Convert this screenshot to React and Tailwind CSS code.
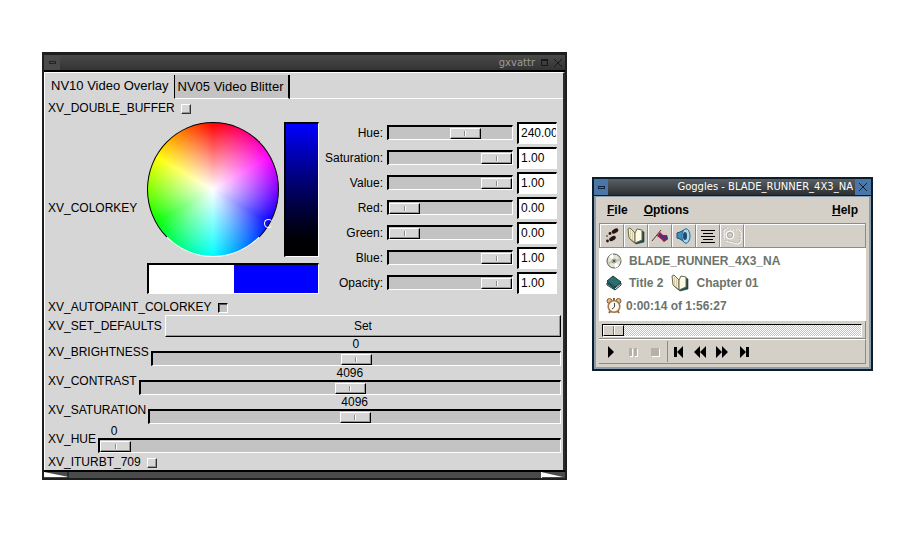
import { useState } from 'react';

const THUMB =
  '[&::-webkit-slider-thumb]:appearance-none [&::-webkit-slider-thumb]:h-[11px] [&::-webkit-slider-thumb]:w-[31px] [&::-webkit-slider-thumb]:border [&::-webkit-slider-thumb]:border-t-white [&::-webkit-slider-thumb]:border-l-white [&::-webkit-slider-thumb]:border-r-black [&::-webkit-slider-thumb]:border-b-black [&::-webkit-slider-thumb]:shadow-[inset_-1px_-1px_0_#969696] [&::-webkit-slider-thumb]:bg-[#d6d6d6] [&::-webkit-slider-thumb]:bg-[linear-gradient(90deg,#8a8a8a_1px,#fff_1px)] [&::-webkit-slider-thumb]:bg-size-[2px_5px] [&::-webkit-slider-thumb]:bg-center [&::-webkit-slider-thumb]:bg-no-repeat';
const TROUGH =
  'block appearance-none rounded-none h-[15px] min-w-0 bg-[#c3c3c3] border-t-2 border-l-2 border-t-black border-l-black border-b border-r border-b-white border-r-white';

const channels = [
  { name: 'Hue', pos: 66, text: '240.00' },
  { name: 'Saturation', pos: 100, text: '1.00' },
  { name: 'Value', pos: 100, text: '1.00' },
  { name: 'Red', pos: 0, text: '0.00' },
  { name: 'Green', pos: 0, text: '0.00' },
  { name: 'Blue', pos: 100, text: '1.00' },
  { name: 'Opacity', pos: 100, text: '1.00' },
];

function ChannelRow({ channel }) {
  const [pos, setPos] = useState(channel.pos);
  const id = `channel-${channel.name}`;
  return (
    <div className="flex items-center h-[25px]">
      <label htmlFor={id} className="flex-1 text-right pr-1">{channel.name}:</label>
      <input
        id={id}
        type="range"
        value={pos}
        onChange={(e) => setPos(e.target.value)}
        className={`w-[126px] mr-1 ${TROUGH} ${THUMB}`}
      />
      <input
        type="text"
        aria-label={`${channel.name} value`}
        defaultValue={channel.text}
        className="w-10 h-[22px] pl-[2px] bg-white border-t-2 border-l-2 border-t-black border-l-black border-b border-r border-b-white border-r-white outline-none"
      />
    </div>
  );
}

function CheckRow({ label, checked, className }) {
  const id = `attr-${label}`;
  return (
    <div className={`flex items-center ${className}`}>
      <label htmlFor={id} className="pr-[2px]">{label}</label>
      <input
        id={id}
        type="checkbox"
        defaultChecked={checked}
        className="appearance-none ml-1 mt-[2px] size-[10px] bg-[#d6d6d6] border border-t-white border-l-white border-r-[#333] border-b-[#333] shadow-[inset_-1px_-1px_0_#969696] checked:bg-[#c3c3c3] checked:border-t-black checked:border-l-black checked:border-r-white checked:border-b-white checked:shadow-[inset_1px_1px_0_#555]"
      />
    </div>
  );
}

function ScaleRow({ label, initial, min = 0, max }) {
  const [value, setValue] = useState(initial);
  const ratio = (value - min) / (max - min);
  const id = `attr-${label}`;
  return (
    <div className="flex items-center h-[29px]">
      <label htmlFor={id} className="pr-[2px]">{label}</label>
      <div className="flex-1">
        <div className="flex h-[14px] leading-[14px]">
          <div style={{ flexGrow: ratio }} />
          <output htmlFor={id} className="w-8 text-center">{value}</output>
          <div style={{ flexGrow: 1 - ratio }} />
        </div>
        <input
          id={id}
          type="range"
          min={min}
          max={max}
          value={value}
          onChange={(e) => setValue(Number(e.target.value))}
          className={`w-full ${TROUGH} ${THUMB}`}
        />
      </div>
    </div>
  );
}

function ColorWheel() {
  return (
    <div className="relative w-[132px] h-[135px]">
      <div className="size-full rounded-[50%] border border-black border-b-white bg-[radial-gradient(closest-side,#fff,transparent),conic-gradient(#f00,#f0f,#00f,#0ff,#0f0,#ff0,#f00)]" />
      <span className="absolute right-[6px] bottom-[29px] size-[9px] rounded-full border border-white border-r-transparent" />
    </div>
  );
}

function AttrWindow() {
  return (
    <section className="border-2 border-[#1c1f1e] border-t-[3px] bg-[#d6d6d6] text-black">
      <header className="flex items-center h-[17px] bg-linear-to-b from-[#4a4a4a] to-[#333] border-b-2 border-black text-[#9a9a9a]">
        <button type="button" aria-label="Minimize" className="w-4 h-[15px] flex items-center justify-center bg-[#4a4a4a]">
          <span className="w-[7px] h-[3px] border border-[#222]" />
        </button>
        <h1 className="flex-1 text-right pr-[6px] text-[10px] leading-[15px] font-['DejaVu_Sans',sans-serif]">gxvattr</h1>
        <button type="button" aria-label="Maximize" className="w-[13px] h-[15px] flex items-center">
          <span className="size-[7px] border border-t-2 border-[#181818]" />
        </button>
        <button type="button" aria-label="Close" className="w-[11px] h-[15px] flex items-center">
          <svg width="8" height="8" viewBox="0 0 8 8" stroke="#181818"><path d="M0 0 8 8M8 0 0 8" /></svg>
        </button>
      </header>

      <div className="border-t border-l border-white border-r-2 border-r-[#2c2c2c]">
        <nav className="flex h-[26px] text-[13px]">
          <button type="button" className="pl-[6px] pr-[5px]">NV10 Video Overlay</button>
          <button type="button" className="mt-[2px] pl-[3px] pr-1 bg-[#c3c3c3] border-l border-r-2 border-black border-b border-b-white">NV05 Video Blitter</button>
          <div className="flex-1 border-b border-white" />
        </nav>

        <div className="pl-[3px] pr-[2px]">
          <CheckRow label="XV_DOUBLE_BUFFER" className="h-[17px]" />

          <div className="flex items-start h-[183px]">
            <span className="self-center w-[99px]">XV_COLORKEY</span>
            <div className="pt-[6px]">
              <div className="flex gap-[5px]">
                <ColorWheel />
                <div className="w-[35px] border-2 border-r border-b border-t-black border-l-black border-r-white border-b-white bg-linear-to-b from-[#00f] to-black" />
              </div>
              <div className="flex mt-[6px] h-[31px] border-2 border-r border-b border-t-black border-l-black border-r-white border-b-white">
                <div className="flex-1 bg-white" />
                <div className="flex-1 bg-[#00f]" />
              </div>
            </div>
            <div className="flex-1 pt-1 pr-1">
              {channels.map((channel) => (
                <ChannelRow key={channel.name} channel={channel} />
              ))}
            </div>
          </div>

          <CheckRow label="XV_AUTOPAINT_COLORKEY" checked className="h-4" />
          <div className="flex items-center h-[22px]">
            <label htmlFor="set-defaults" className="pr-[3px]">XV_SET_DEFAULTS</label>
            <button id="set-defaults" type="button" className="flex-1 h-[22px] border border-t-white border-l-white border-r-black border-b-black shadow-[inset_-1px_-1px_0_#969696]">Set</button>
          </div>
          <ScaleRow label="XV_BRIGHTNESS" initial={0} min={-512} max={512} />
          <ScaleRow label="XV_CONTRAST" initial={4096} max={8191} />
          <ScaleRow label="XV_SATURATION" initial={4096} max={8191} />
          <ScaleRow label="XV_HUE" initial={0} max={360} />
          <CheckRow label="XV_ITURBT_709" className="h-[17px]" />
        </div>
      </div>

      <footer className="flex justify-between h-2 border-t-2 border-black bg-[#4a4a4a]">
        <svg width="25" height="6" viewBox="0 0 25 6"><path d="M0 0v5h25z" fill="#fff" /><path d="M24 0v6" stroke="#111" /></svg>
        <svg width="24" height="6" viewBox="0 0 24 6"><path d="M0 0v6" stroke="#fff" strokeWidth="2" /><path d="M0 0v5h22z" fill="#fff" /></svg>
      </footer>
    </section>
  );
}

const Footsteps = () => (
  <svg width="18" height="18" viewBox="0 0 18 18" fill="#2a1215">
    <ellipse cx="12" cy="4" rx="3.6" ry="2" transform="rotate(-30 12 4)" />
    <circle cx="7" cy="6.500" r="1.400" />
    <ellipse cx="9.500" cy="11.500" rx="3.600" ry="2" transform="rotate(-30 9.500 11.500)" />
    <circle cx="4.500" cy="14" r="1.400" />
    <circle cx="4" cy="9" r="0.800" />
  </svg>
);

const OpenBook = () => (
  <svg width="18" height="18" viewBox="0 0 18 18">
    <path d="M3 12 9 17 17 15V5L15 4V13z" fill="#1d4f52" stroke="#14393b" strokeWidth=".6" />
    <path d="M1 2 3 1 8 6V16L2 11z" fill="#f3edcb" stroke="#6b6950" />
    <path d="M8 6 10 2 15 3V13L8 16z" fill="#fffbe2" stroke="#6b6950" />
    <path d="M3.500 3v8M5.500 5v8" stroke="#d6cfa8" />
  </svg>
);

const Flag = () => (
  <svg width="18" height="18" viewBox="0 0 18 18">
    <path d="M1 14 10 3" stroke="#5b2f30" />
    <path d="M6 9 9 5 12 8 16 8 17 12 13 15 10 12z" fill="#a5183c" />
    <path d="M9 7 12 8 13 11 10 12zM13 11 16 9 17 12 14 14z" fill="#39388f" />
  </svg>
);

const Speaker = () => (
  <svg width="18" height="18" viewBox="0 0 18 18">
    <path d="M2 6 5 5 11 2V16L5 12 2 11z" fill="#3f8fba" stroke="#205371" />
    <ellipse cx="11" cy="9" rx="4" ry="7.200" fill="#a9d8ea" stroke="#2a6592" />
    <ellipse cx="10" cy="9" rx="2" ry="4" fill="#1d4a74" />
  </svg>
);

const Lines = () => (
  <svg width="18" height="18" viewBox="0 0 18 18" stroke="#000" shapeRendering="crispEdges">
    <path d="M2 3.500h14M4 6.500h10M2 9.500h14M4 12.500h10M2 15.500h14" />
  </svg>
);

const Camera = () => (
  <svg width="20" height="18" viewBox="0 0 20 18" fill="none">
    <path d="M2 4 5 1 8 3H17L19 5V15L16 17 4 14 2 12z" stroke="#fff" />
    <path d="M1 3 4 1 8 3H16L18 5V14L15 16 3 13 1 11z" stroke="#b4b0a8" strokeDasharray="2 1" />
    <circle cx="8" cy="8" r="4" stroke="#fff" />
    <circle cx="8" cy="8" r="2.500" stroke="#aaa69e" />
  </svg>
);

const Disc = () => (
  <svg width="16" height="16" viewBox="0 0 16 16">
    <circle cx="8" cy="8" r="7" fill="#e4e4d8" stroke="#55574f" />
    <path d="M8 8 3 3.500A7 7 0 0 1 7 1zM8 8 13 12.500A7 7 0 0 1 9 15z" fill="#fff" />
    <path d="M8 8 14 4.500 15 8zM8 8 1.500 9 3 12z" fill="#bcd0b0" />
    <circle cx="8" cy="8" r="2" fill="#fff" stroke="#8d7a7a" />
    <circle cx="8" cy="8" r="1" fill="#222" />
  </svg>
);

const ClosedBook = () => (
  <svg width="16" height="16" viewBox="0 0 16 16">
    <path d="M1 8 9 13 15 8V10L9 15 1 10z" fill="#eee" stroke="#163b40" />
    <path d="M1 6 7 1 15 7 9 12z" fill="#2d6e71" stroke="#163b40" />
    <path d="M1 6 9 12V15L1 9z" fill="#1d4f52" />
  </svg>
);

const Clock = () => (
  <svg width="16" height="16" viewBox="0 0 16 16">
    <path d="M3 15 5 12M13 15 11 12M8 0v3" stroke="#8a6238" strokeWidth="2" />
    <circle cx="3.500" cy="3" r="2.500" fill="#e3bd88" stroke="#7d5c3a" />
    <circle cx="12.500" cy="3" r="2.500" fill="#e3bd88" stroke="#7d5c3a" />
    <circle cx="8" cy="8.500" r="5.800" fill="#f9f7f0" stroke="#a5794c" strokeWidth="1.600" />
    <path d="M8.500 5V9L6 11" fill="none" stroke="#444" />
  </svg>
);

const tools = [
  { name: 'Go', icon: Footsteps },
  { name: 'Chapters', icon: OpenBook },
  { name: 'Bookmarks', icon: Flag },
  { name: 'Audio', icon: Speaker },
  { name: 'Subtitles', icon: Lines },
  { name: 'Snapshot', icon: Camera, disabled: true },
];

const transport = [
  { name: 'Play', d: 'M4 1 10 7 4 13z' },
  { name: 'Pause', d: 'M3 3h3v8H3zM8 3h3v8H8z', disabled: true },
  { name: 'Stop', d: 'M3 3h8v8H3z', disabled: true },
  { name: 'Previous', d: 'M2 2h3v10H2zM5 7 11 1V13z' },
  { name: 'Rewind', d: 'M1 7 7 1V13zM7 7 13 1V13z' },
  { name: 'Forward', d: 'M1 1 7 7 1 13zM7 1 13 7 7 13z' },
  { name: 'Next', d: 'M3 1 9 7 3 13zM9 2h3v10H9z' },
];

function GogglesWindow() {
  const [time, setTime] = useState(0);
  return (
    <section className="border-2 border-[#0c1d2b] bg-[#d4d0c8] font-bold">
      <header className="flex items-center h-[17px] bg-linear-to-b from-[#5a6064] to-[#2c3033] border-b border-[#0c1d2b] text-white">
        <button type="button" aria-label="Minimize" className="w-[14px] h-4 flex items-center justify-center bg-[#4a76a8]">
          <span className="w-[7px] h-[3px] border border-[#10233a]" />
        </button>
        <h1 className="flex-1 text-right pr-[2px] text-[10px] leading-4 font-normal whitespace-nowrap font-['DejaVu_Sans',sans-serif]">Goggles - BLADE_RUNNER_4X3_NA</h1>
        <button type="button" aria-label="Close" className="w-4 h-4 flex items-center justify-center bg-[#4a76a8]">
          <svg width="8" height="8" viewBox="0 0 8 8" stroke="#10233a"><path d="M0 0 8 8M8 0 0 8" /></svg>
        </button>
      </header>

      <div className="border-2 border-t border-[#8b9dad] px-[3px] pb-[3px]">
        <nav className="flex items-center h-[26px] px-2 gap-4">
          <button type="button"><u>F</u>ile</button>
          <button type="button"><u>O</u>ptions</button>
          <button type="button" className="ml-auto"><u>H</u>elp</button>
        </nav>

        <div className="flex h-[25px] border-t border-l border-[#8e8b84] border-b border-r">
          {tools.map(({ name, icon: Icon, disabled }) => (
            <button key={name} type="button" aria-label={name} disabled={disabled} className="w-6 flex items-center justify-center border-t border-l border-white border-r border-r-[#8e8b84]">
              <Icon />
            </button>
          ))}
          <div className="flex-1 border-t border-l border-white" />
        </div>

        <div className="bg-white h-[73px] pl-[7px] pt-[3px] text-[#6b746b]">
          <div className="flex items-center h-5 gap-[7px]"><Disc />BLADE_RUNNER_4X3_NA</div>
          <div className="flex items-center h-6 gap-2">
            <span className="flex items-center gap-[7px]"><ClosedBook />Title 2</span>
            <span className="flex items-center gap-[7px]"><OpenBook />Chapter 01</span>
          </div>
          <div className="flex items-center h-[22px] gap-1"><Clock />0:00:14 of 1:56:27</div>
        </div>

        <div className="p-[3px] pb-px border-b border-r border-[#8e8b84]">
          <input
            type="range"
            aria-label="Position"
            value={time}
            max="6987"
            onChange={(e) => setTime(e.target.value)}
            className="block w-full h-[13px] appearance-none border-t border-l border-black border-b border-r border-b-white border-r-white bg-[repeating-conic-gradient(#c8c4bc_0_25%,#fff_0_50%)] bg-size-[2px_2px] [&::-webkit-slider-thumb]:appearance-none [&::-webkit-slider-thumb]:w-[21px] [&::-webkit-slider-thumb]:h-[11px] [&::-webkit-slider-thumb]:border [&::-webkit-slider-thumb]:border-t-white [&::-webkit-slider-thumb]:border-l-white [&::-webkit-slider-thumb]:border-r-black [&::-webkit-slider-thumb]:border-b-black [&::-webkit-slider-thumb]:bg-[linear-gradient(90deg,#d4d0c8_9px,#77746e_9px,#77746e_10px,#fff_10px,#fff_11px,#d4d0c8_11px)]"
          />
        </div>

        <div className="flex items-center h-[25px] pl-px border-t border-t-white border-b border-r border-[#8e8b84]">
          {transport.map(({ name, d, disabled }) => (
            <button key={name} type="button" aria-label={name} disabled={disabled} className="w-[22px] h-[21px] flex items-center justify-center nth-4:border-l nth-4:border-[#8e8b84] nth-4:ml-px">
              <svg width="14" height="14" viewBox="0 0 14 14">
                {disabled && <path d={d} fill="#fff" transform="translate(1 1)" />}
                <path d={d} fill={disabled ? '#b5b1a9' : '#000'} />
              </svg>
            </button>
          ))}
        </div>
      </div>
    </section>
  );
}

export default function App() {
  return (
    <main className="min-h-screen bg-white grid grid-cols-[525fr_281fr] items-start gap-[25px] pl-[42px] pr-[43px] pt-[52px] text-[12px] leading-4 font-['Liberation_Sans',Arial,sans-serif]">
      <AttrWindow />
      <div className="pt-[125px]">
        <GogglesWindow />
      </div>
    </main>
  );
}
